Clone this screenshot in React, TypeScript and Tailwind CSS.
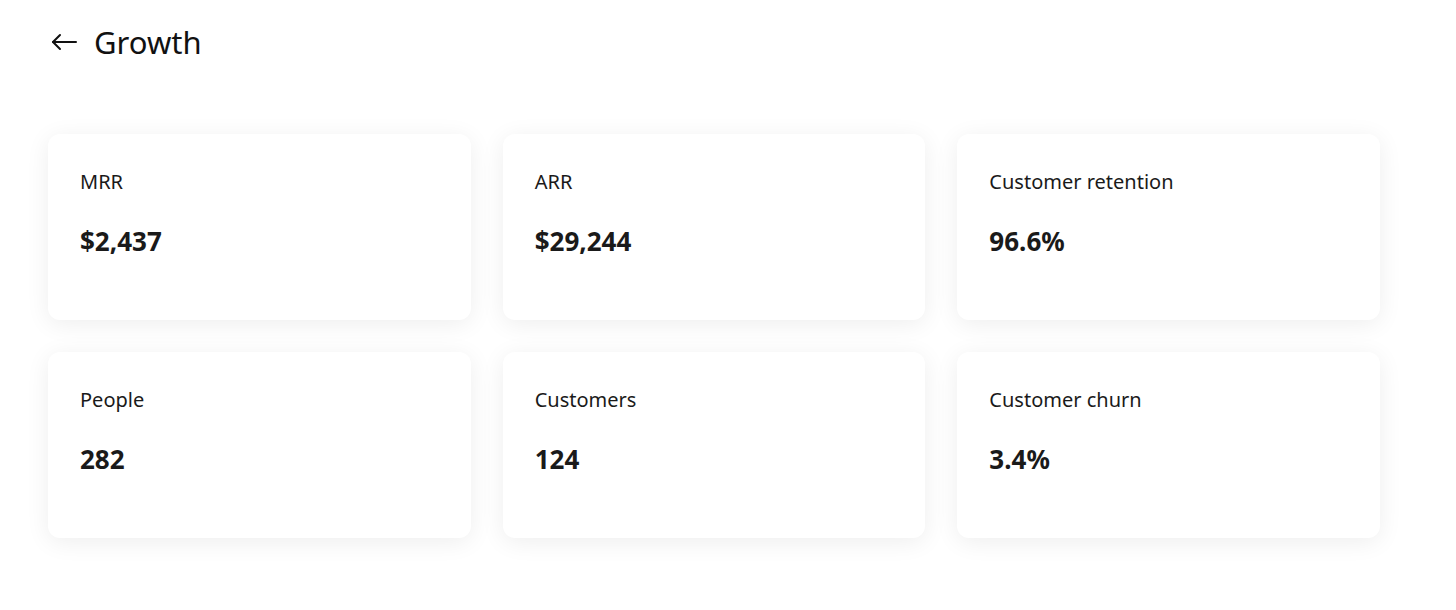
const stats = [
  { label: 'MRR', value: '$2,437' },
  { label: 'ARR', value: '$29,244' },
  { label: 'Customer retention', value: '96.6%' },
  { label: 'People', value: '282' },
  { label: 'Customers', value: '124' },
  { label: 'Customer churn', value: '3.4%' },
];

function StatCard({ label, value }: { label: string; value: string }) {
  return (
    <div className="h-[186px] rounded-xl bg-white px-8 pt-[34px] shadow-[0_4px_24px_rgba(0,0,0,0.07)]">
      <div className="text-[20px] leading-7 text-[#1a1a1a]">{label}</div>
      <div className="mt-[29px] text-[26px] font-bold leading-8 text-[#1a1a1a]">{value}</div>
    </div>
  );
}

export default function App() {
  return (
    <div className="min-h-screen bg-white px-12 pt-[22px] font-['Noto_Sans',sans-serif] text-[#111]">
      <div className="flex items-center gap-[17px] pl-[3px]">
        <svg width="26" height="18" viewBox="0 0 26 18" fill="none" stroke="currentColor" strokeWidth="2" strokeLinecap="round" strokeLinejoin="round">
          <path d="M25 9H2" />
          <path d="M9 2L2 9L9 16" />
        </svg>
        <h1 className="text-[31px] leading-10 font-normal">Growth</h1>
      </div>
      <div className="mt-[72px] grid w-[1332px] grid-cols-3 gap-8">
        {stats.map((s) => (
          <StatCard key={s.label} label={s.label} value={s.value} />
        ))}
      </div>
    </div>
  );
}
